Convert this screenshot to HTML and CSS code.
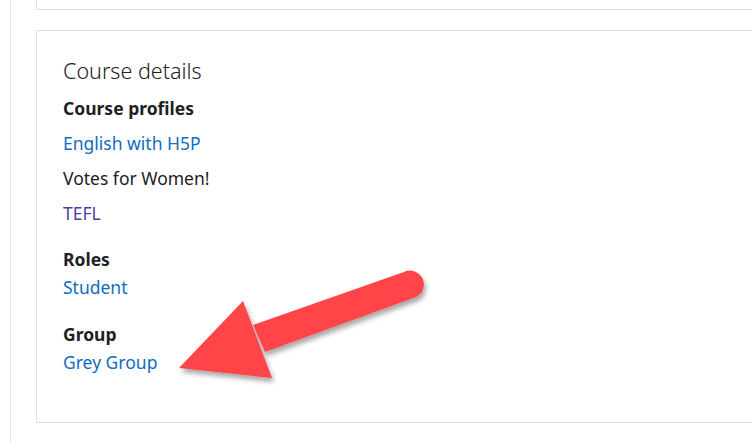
FILE: index.html
```html
<!DOCTYPE html>
<html lang="en">
<head>
  <meta charset="UTF-8">
  <title>Course details</title>
  <link rel="stylesheet" href="styles.css">
</head>
<body>
  <div class="page">
    <div class="card card-top"></div>

    <div class="card">
      <h3 class="card-title">Course details</h3>
      <dl>
        <dt>Course profiles</dt>
        <dd class="profiles-dd">
          <ul class="profiles">
            <li><a href="#">English with H5P</a></li>
            <li>Votes for Women!</li>
            <li><a href="#" class="visited">TEFL</a></li>
          </ul>
        </dd>
        <dt>Roles</dt>
        <dd class="roles-dd"><a href="#">Student</a></dd>
        <dt>Group</dt>
        <dd><a href="#">Grey Group</a></dd>
      </dl>
    </div>
  </div>

  <!-- annotation arrow -->
  <svg class="arrow" width="300" height="160" viewBox="160 250 300 160">
    <defs>
      <filter id="shadow" x="-20%" y="-20%" width="140%" height="140%">
        <feDropShadow dx="2" dy="4" stdDeviation="2.5" flood-color="#000" flood-opacity="0.35"/>
      </filter>
    </defs>
    <g filter="url(#shadow)" fill="#ff4447">
      <path d="M253 325 L404 272 A13 13 0 0 1 416 297 L265 352 Z"/>
      <polygon points="243,301 179,368 272,378"/>
    </g>
  </svg>
</body>
</html>
```

FILE: styles.css
```css
body {
  margin: 0;
  font-family: "Noto Sans", "Open Sans", Arial, sans-serif;
  font-size: 17.5px;
  color: #1d2125;
  background: #fff;
  overflow: hidden;
}

.page {
  margin-left: 10px;
  border-left: 1px solid #dee2e6;
  padding-left: 25px;
  height: 442px;
}

.card {
  border: 1px solid #dee2e6;
  border-right: none;
  padding: 24px 26px 0;
  height: 367px;
}

.card-top {
  border-top: none;
  height: 9px;
  padding: 0;
  margin-bottom: 20px;
}

.card-title {
  margin: 0 0 7px;
  font-size: 21.5px;
  font-weight: 300;
  line-height: 32px;
}

dl {
  margin: 0;
}

dt {
  font-weight: bold;
  line-height: 28px;
}

dd {
  margin: 0;
  line-height: 28px;
}

.profiles-dd {
  margin-bottom: 15px;
}

.roles-dd {
  margin-bottom: 19px;
}

.profiles {
  list-style: none;
  margin: 3px 0 0;
  padding: 0;
}

.profiles li {
  padding: 3.5px 0;
}

a {
  color: #0f6cbf;
  text-decoration: none;
}

a.visited {
  color: #4d3fa3;
}

.arrow {
  position: absolute;
  left: 160px;
  top: 250px;
}
```
